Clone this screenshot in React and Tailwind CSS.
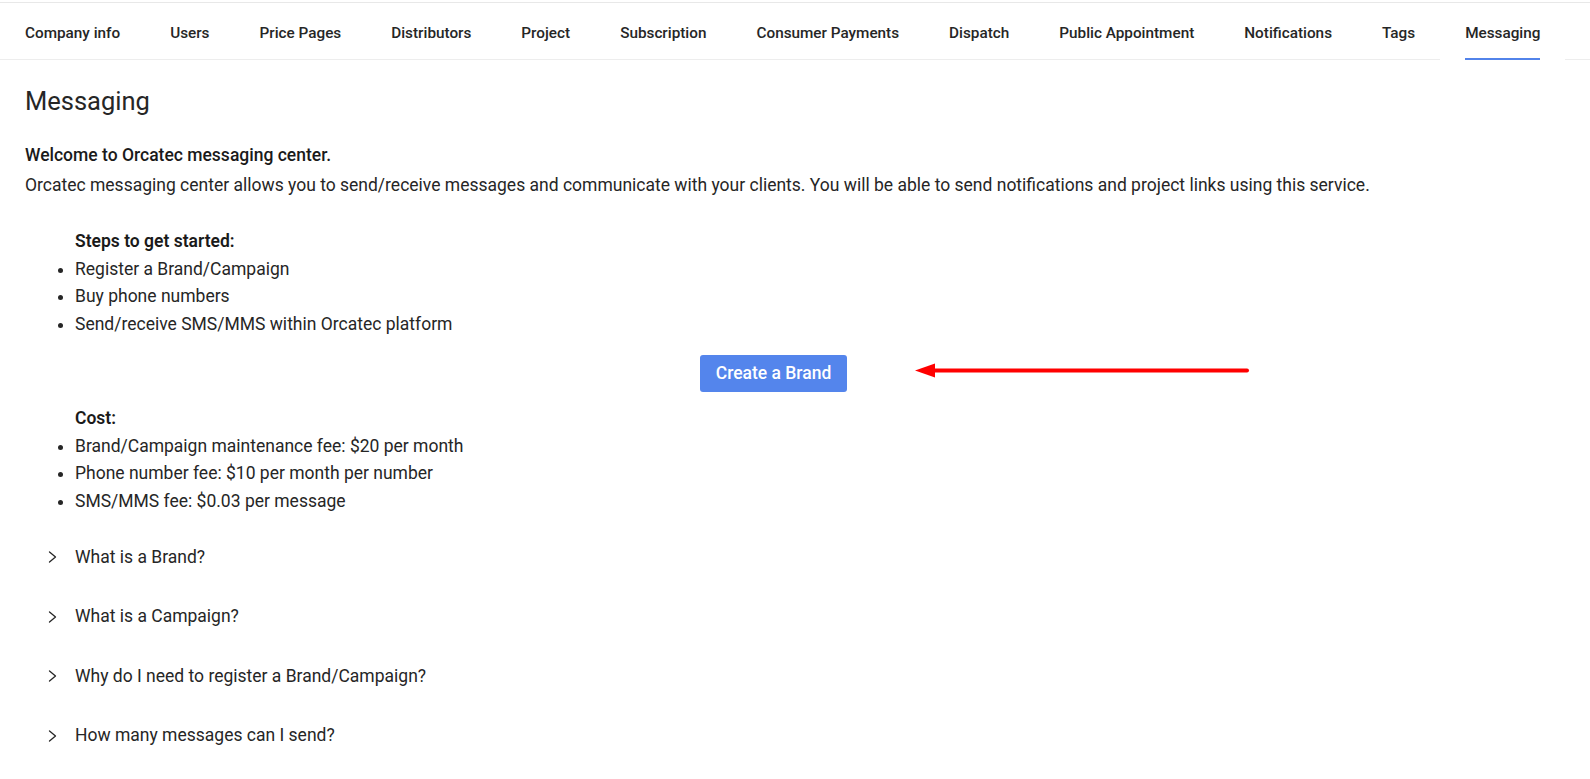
import React from 'react';

const tabs = [
    'Company info',
    'Users',
    'Price Pages',
    'Distributors',
    'Project',
    'Subscription',
    'Consumer Payments',
    'Dispatch',
    'Public Appointment',
    'Notifications',
    'Tags',
    'Messaging',
];

const faqs = [
    'What is a Brand?',
    'What is a Campaign?',
    'Why do I need to register a Brand/Campaign?',
    'How many messages can I send?',
];

const Chevron = () => (
    <svg width="10" height="12" viewBox="0 0 10 12" fill="none" className="shrink-0">
        <path d="M1.5 1L7.5 6L1.5 11" stroke="#262626" strokeWidth="1.3" strokeLinecap="round" strokeLinejoin="round" />
    </svg>
);

const App = () => {
    const active = 'Messaging';

    return (
        <div className="min-h-screen bg-white text-[#262626] font-['Roboto','Liberation_Sans',sans-serif]">
            {/* top edge */}
            <div className="h-[2px]" />
            <div className="border-t border-[#e8e8e8]" />

            {/* Tabs */}
            <nav className="flex h-[57px]">
                {tabs.map((t) => (
                    <div
                        key={t}
                        className={
                            t === active
                                ? 'relative px-[25px] pt-[18px] text-[15.3px] font-medium leading-[24px] text-[#262626]'
                                : 'px-[25px] pt-[18px] text-[15.3px] font-medium leading-[24px] text-[#262626] border-b border-[#ededed]'
                        }
                    >
                        {t}
                        {t === active && (
                            <span className="absolute left-[25px] right-[25px] bottom-0 h-[2px] bg-[#5283ea]" />
                        )}
                    </div>
                ))}
                <div className="flex-1 border-b border-[#ededed]" />
            </nav>

            {/* Content */}
            <main className="px-[25px]">
                <h1 className="mt-[26px] text-[25.5px] leading-[30px] font-normal">Messaging</h1>

                <p className="mt-[26px] text-[17.5px] leading-[27.5px] font-medium text-[#1a1a1a]">
                    Welcome to Orcatec messaging center.
                </p>
                <p className="mt-[2px] text-[17.5px] leading-[27.5px]">
                    Orcatec messaging center allows you to send/receive messages and communicate with your clients. You will be able to send notifications and project links using this service.
                </p>

                <div className="mt-[29px] pl-[50px]">
                    <p className="text-[17.5px] leading-[27.5px] font-semibold text-[#1a1a1a]">Steps to get started:</p>
                    <ul className="list-disc text-[17.5px] leading-[27.5px]">
                        <li>Register a Brand/Campaign</li>
                        <li>Buy phone numbers</li>
                        <li>Send/receive SMS/MMS within Orcatec platform</li>
                    </ul>
                </div>

                <div className="relative mt-[17px] flex justify-center pr-[43px]">
                    <button className="h-[37px] w-[147px] rounded-[3px] bg-[#5485ec] text-[17.5px] font-medium text-white">
                        Create a Brand
                    </button>
                    <svg
                        className="absolute left-[866px] top-[5px]"
                        width="370"
                        height="20"
                        viewBox="0 0 370 20"
                    >
                        <line x1="38" y1="10.5" x2="356" y2="10.5" stroke="#ff0000" strokeWidth="4" strokeLinecap="round" />
                        <polygon points="24,10.5 44,3.5 44,17.5" fill="#ff0000" />
                    </svg>
                </div>

                <div className="mt-[13px] pl-[50px]">
                    <p className="text-[17.5px] leading-[27.5px] font-semibold text-[#1a1a1a]">Cost:</p>
                    <ul className="list-disc text-[17.5px] leading-[27.5px]">
                        <li>Brand/Campaign maintenance fee: $20 per month</li>
                        <li>Phone number fee: $10 per month per number</li>
                        <li>SMS/MMS fee: $0.03 per message</li>
                    </ul>
                </div>

                <div className="mt-[20px]">
                    {faqs.map((q) => (
                        <div key={q} className="flex h-[59.5px] items-start gap-[17px] pl-[23px] pt-[16px] text-[17.5px] leading-[27.5px]">
                            <Chevron />
                            <span className="-mt-[7.5px]">{q}</span>
                        </div>
                    ))}
                </div>
            </main>
        </div>
    );
};

export default App;
